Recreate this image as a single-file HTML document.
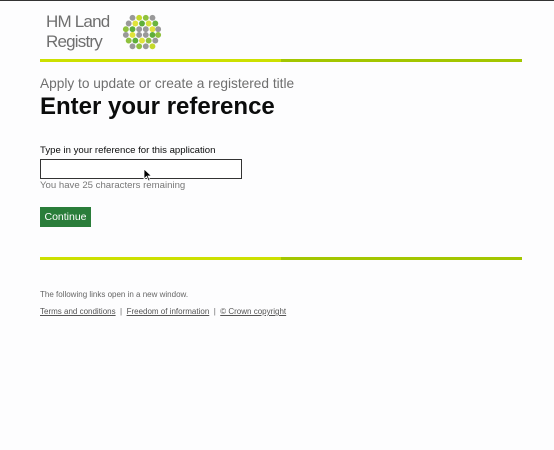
<!DOCTYPE html>
<html><head><meta charset="utf-8"><style>
body{margin:0;width:554px;height:450px;background:#fdfdfe;font-family:"Liberation Sans",Arial,sans-serif;position:relative;overflow:hidden;border-top:1px solid #333;box-sizing:border-box}
.a{position:absolute;white-space:nowrap}
.bar{position:absolute;left:40px;width:482px;height:3px;background:linear-gradient(to right,#cce000 0,#cce000 241px,#a3c600 241px)}
a{color:#555;text-decoration:underline}
</style></head><body>
<div class="a" style="left:46px;top:11px;font-size:17px;line-height:20px;color:#6f6f6f;letter-spacing:-0.8px">HM Land<br>Registry</div>
<svg class="a" style="left:122px;top:13px" width="40" height="38" viewBox="0 0 42 40">
<g>
<circle cx="11" cy="4" r="3.1" fill="#999"/><circle cx="18" cy="4" r="3.1" fill="#c5d92a"/><circle cx="25" cy="4" r="3.1" fill="#8fc13e"/><circle cx="32" cy="4" r="3.1" fill="#999"/>
<circle cx="7" cy="10" r="3.1" fill="#999"/><circle cx="14" cy="10" r="3.1" fill="#e0e33a"/><circle cx="21" cy="10" r="3.1" fill="#5fae3a"/><circle cx="28" cy="10" r="3.1" fill="#d5e03a"/><circle cx="35" cy="10" r="3.1" fill="#6bb43e"/>
<circle cx="4" cy="16" r="3.1" fill="#8fc13e"/><circle cx="11" cy="16" r="3.1" fill="#5fae3a"/><circle cx="18" cy="16" r="3.1" fill="#999"/><circle cx="25" cy="16" r="3.1" fill="#999"/><circle cx="32" cy="16" r="3.1" fill="#e0e33a"/><circle cx="38" cy="16" r="3.1" fill="#999"/>
<circle cx="4" cy="22" r="3.1" fill="#999"/><circle cx="11" cy="22" r="3.1" fill="#e0e33a"/><circle cx="18" cy="22" r="3.1" fill="#999"/><circle cx="25" cy="22" r="3.1" fill="#999"/><circle cx="32" cy="22" r="3.1" fill="#5fae3a"/><circle cx="38" cy="22" r="3.1" fill="#8fc13e"/>
<circle cx="7" cy="28" r="3.1" fill="#8fc13e"/><circle cx="14" cy="28" r="3.1" fill="#5fae3a"/><circle cx="21" cy="28" r="3.1" fill="#e0e33a"/><circle cx="28" cy="28" r="3.1" fill="#8fc13e"/><circle cx="35" cy="28" r="3.1" fill="#999"/>
<circle cx="11" cy="34" r="3.1" fill="#999"/><circle cx="18" cy="34" r="3.1" fill="#8fc13e"/><circle cx="25" cy="34" r="3.1" fill="#999"/><circle cx="32" cy="34" r="3.1" fill="#c5d92a"/>
</g></svg>
<div class="bar" style="top:58px"></div>
<div class="a" style="left:40px;top:75px;font-size:13.7px;color:#6f6f6f">Apply to update or create a registered title</div>
<div class="a" style="left:40px;top:92px;font-size:24px;font-weight:bold;color:#0b0c0c">Enter your reference</div>
<div class="a" style="left:40px;top:144px;font-size:9.6px;color:#0b0c0c">Type in your reference for this application</div>
<div class="a" style="left:40px;top:158px;width:200px;height:18px;border:1.5px solid #333;background:#fff"></div>
<div class="a" style="left:40px;top:179px;font-size:9.6px;color:#777">You have 25 characters remaining</div>
<div class="a" style="left:40px;top:206px;width:51px;height:20px;background:#2a7d3a;color:#fff;font-size:10.5px;line-height:20px;text-align:center">Continue</div>
<svg class="a" style="left:143px;top:167px" width="10" height="14"><path d="M1 1 L1 11 L3.5 8.5 L5.5 13 L7 12.3 L5 8 L8.5 8 Z" fill="#000" stroke="#fff" stroke-width="0.8"/></svg>
<div class="bar" style="top:256px"></div>
<div class="a" style="left:40px;top:289px;font-size:8px;color:#666">The following links open in a new window.</div>
<div class="a" style="left:40px;top:306px;font-size:8px;color:#666"><a>Terms and conditions</a>&nbsp; | &nbsp;<a>Freedom of information</a>&nbsp; | &nbsp;<a>© Crown copyright</a></div>
</body></html>
